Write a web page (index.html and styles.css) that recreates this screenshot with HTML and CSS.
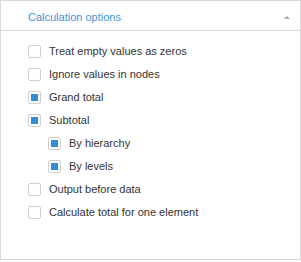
FILE: index.html
```html
<!DOCTYPE html>
<html>
<head>
<meta charset="utf-8">
<link rel="stylesheet" href="styles.css">
</head>
<body>
<div class="panel">
  <div class="panel-header">
    <span class="panel-title">Calculation options</span>
    <span class="collapse-arrow"></span>
  </div>
  <div class="panel-body">
    <label class="option"><span class="box"></span><span class="label">Treat empty values as zeros</span></label>
    <label class="option"><span class="box"></span><span class="label">Ignore values in nodes</span></label>
    <label class="option"><span class="box checked"></span><span class="label">Grand total</span></label>
    <label class="option"><span class="box checked"></span><span class="label">Subtotal</span></label>
    <label class="option nested"><span class="box checked"></span><span class="label">By hierarchy</span></label>
    <label class="option nested"><span class="box checked"></span><span class="label">By levels</span></label>
    <label class="option"><span class="box"></span><span class="label">Output before data</span></label>
    <label class="option"><span class="box"></span><span class="label">Calculate total for one element</span></label>
  </div>
</div>
</body>
</html>
```

FILE: styles.css
```css
html, body {
  margin: 0;
  padding: 0;
  background: #fff;
}
body {
  font-family: "Liberation Sans", Arial, sans-serif;
  font-size: 11px;
  color: #333;
}
.panel {
  width: 301px;
  height: 260px;
  box-sizing: border-box;
  border: 1px solid #dadada;
  display: flex;
  flex-direction: column;
}
.panel-header {
  height: 30px;
  box-sizing: border-box;
  border-bottom: 1px solid #dadada;
  display: flex;
  align-items: center;
  padding: 2px 10px 0 27px;
}
.panel-title {
  flex: 1;
  color: #3a97d9;
  font-size: 11px;
}
.collapse-arrow {
  width: 0;
  height: 0;
  border-left: 3px solid transparent;
  border-right: 3px solid transparent;
  border-bottom: 3px solid #a8a8a8;
  margin-top: 1px;
}
.panel-body {
  flex: 1;
  padding: 14px 0 0 27px;
  display: flex;
  flex-direction: column;
  gap: 10px;
}
.option {
  display: flex;
  align-items: center;
  height: 13px;
  gap: 8px;
}
.option.nested {
  padding-left: 20px;
}
.box {
  width: 13px;
  height: 13px;
  box-sizing: border-box;
  border: 1px solid #cfcfcf;
  border-radius: 2px;
  padding: 2px;
  background: #fff;
  flex: none;
}
.box.checked::after {
  content: "";
  display: block;
  width: 7px;
  height: 7px;
  background: #2d8fd5;
}
.label {
  line-height: 13px;
  white-space: nowrap;
}
```
